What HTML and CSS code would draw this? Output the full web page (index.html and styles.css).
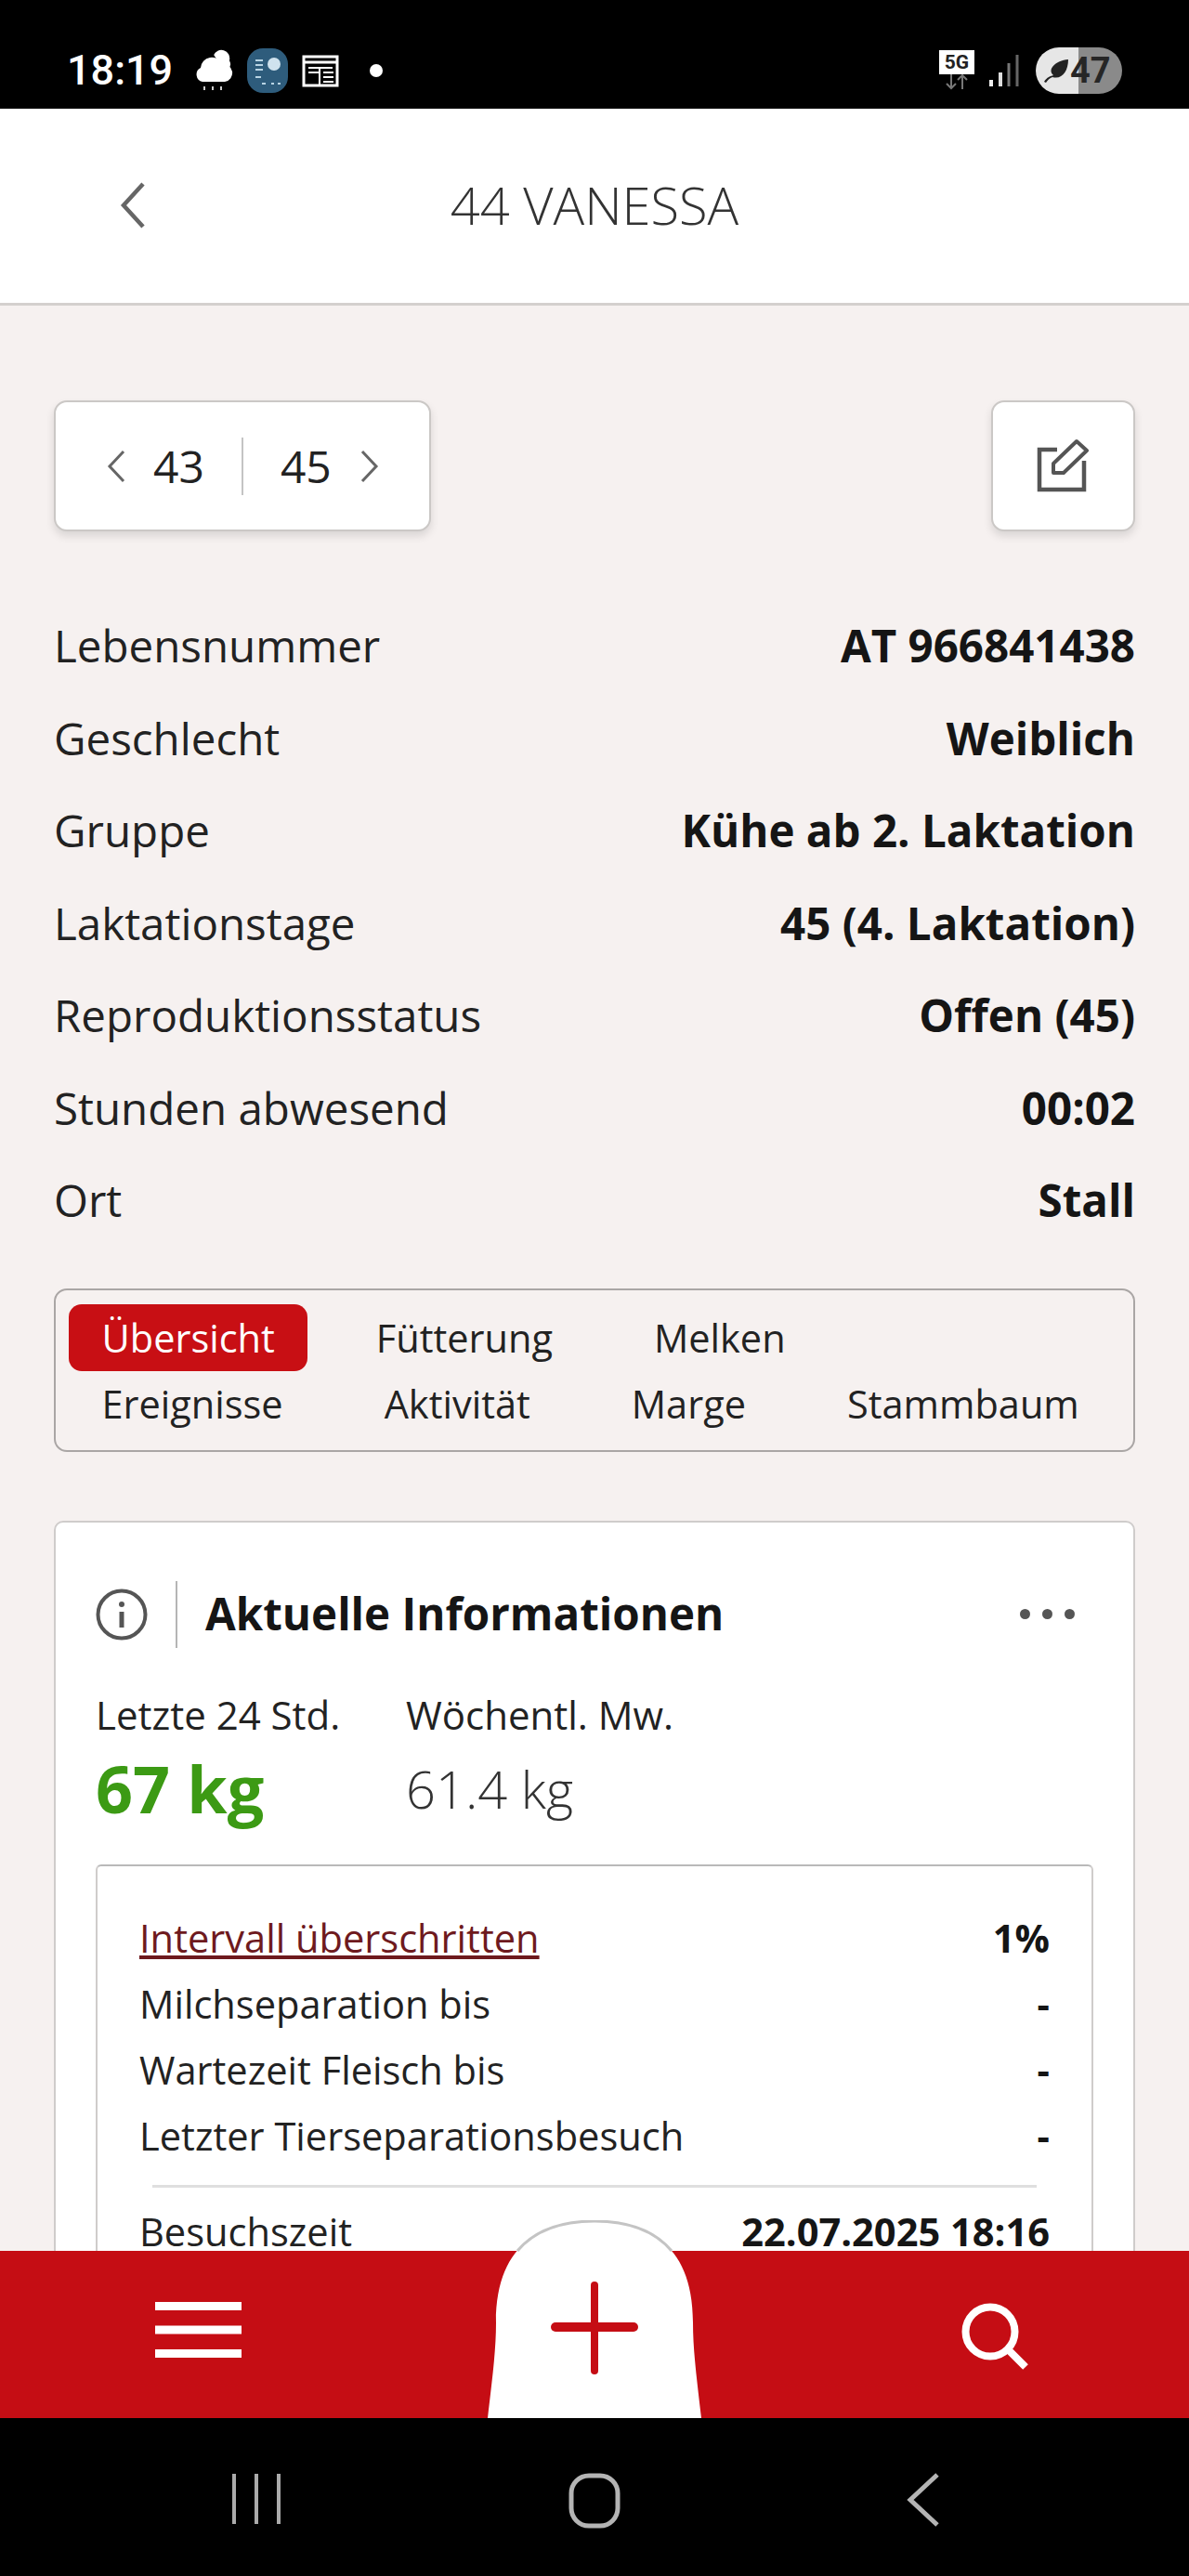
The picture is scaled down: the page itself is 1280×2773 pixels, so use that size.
FILE: index.html
```html
<!DOCTYPE html>
<html lang="de">
<head>
    <meta charset="UTF-8">
    <meta name="viewport" content="width=device-width, initial-scale=1.0">
    <title>44 VANESSA</title>
    <link rel="stylesheet" href="styles.css">
</head>
<body>
    <div class="status-bar">
        <span class="status-time">18:19</span>
        <svg class="status-cloud" width="42" height="46" viewBox="0 0 42 46">
            <path d="M20 6a10 10 0 0 1 19 6 8 8 0 0 1-2 10H30z" fill="#fff" stroke="#000" stroke-width="2"/>
            <path d="M9 35a8 8 0 0 1-2-15 12 12 0 0 1 23-4 9 9 0 0 1 3 19z" fill="#fff"/>
            <path d="M11 40v4M20 40v4M29 40v4" stroke="#ccc" stroke-width="2"/>
        </svg>
        <svg class="status-widget" width="44" height="48" viewBox="0 0 44 48">
            <rect width="44" height="48" rx="17" fill="#2e5c7c"/>
            <path d="M9 13h8M9 18h8M9 23h8M9 31h6M16 38h4M26 38h3M33 38h3" stroke="#b8d4e4" stroke-width="2"/>
            <circle cx="29" cy="17" r="7" fill="#cfe2ee"/>
        </svg>
        <svg class="status-news" width="40" height="36" viewBox="0 0 40 36">
            <path d="M2 3h36v31H2z" fill="none" stroke="#fff" stroke-width="3"/>
            <path d="M2 9h36" stroke="#fff" stroke-width="3"/>
            <path d="M7 15h26M7 20h12M23 20h11M23 25h11M23 30h11M19 15v18" stroke="#fff" stroke-width="2"/>
        </svg>
        <span class="status-dot"></span>
        <span class="status-right">
            <span class="net">
                <span class="net-box">5G</span>
                <svg width="30" height="17" viewBox="0 0 30 17">
                    <path d="M9 0v15M4 10l5 5 5-5M21 16V1M16 6l5-5 5 5" fill="none" stroke="#777" stroke-width="2"/>
                </svg>
            </span>
            <svg class="signal" width="34" height="36" viewBox="0 0 34 36">
                <path d="M3 28v7" stroke="#eee" stroke-width="4"/>
                <path d="M13 20v15" stroke="#ddd" stroke-width="4"/>
                <path d="M22 10v25" stroke="#777" stroke-width="3"/>
                <path d="M31 1v34" stroke="#666" stroke-width="3"/>
            </svg>
            <span class="battery">
                <svg width="30" height="30" viewBox="0 0 30 30">
                    <path d="M2 27C5 22 9 21 12 20 5 14 14 4 28 3 28 16 21 25 11 22 8 23 6 25 4 28z" fill="#222"/>
                </svg>
                <span>47</span>
            </span>
        </span>
    </div>

    <header class="top-bar">
        <svg class="back-icon" width="28" height="52" viewBox="0 0 28 52">
            <path d="M25 3 4 26l21 23" fill="none" stroke="#666" stroke-width="4.5"/>
        </svg>
        <h1 class="page-title">44 VANESSA</h1>
    </header>

    <main class="content">
        <div class="toolbar">
            <div class="pager">
                <svg width="20" height="36" viewBox="0 0 20 36"><path d="M18 2 3 18l15 16" fill="none" stroke="#666" stroke-width="3"/></svg>
                <span class="pager-num pager-prev">43</span>
                <span class="pager-sep"></span>
                <span class="pager-num pager-next">45</span>
                <svg width="20" height="36" viewBox="0 0 20 36"><path d="M2 2l15 16L2 34" fill="none" stroke="#666" stroke-width="3"/></svg>
            </div>
            <div class="edit-button">
                <svg width="60" height="60" viewBox="0 0 60 60">
                    <path d="M25 12H6v43h48V24" fill="none" stroke="#555" stroke-width="4.5"/>
                    <path d="M21 37V27L46 3l11 10-25 24z" fill="none" stroke="#555" stroke-width="4" stroke-linejoin="round"/>
                </svg>
            </div>
        </div>

        <dl class="facts">
            <div class="fact"><dt>Lebensnummer</dt><dd>AT 966841438</dd></div>
            <div class="fact"><dt>Geschlecht</dt><dd>Weiblich</dd></div>
            <div class="fact"><dt>Gruppe</dt><dd>Kühe ab 2. Laktation</dd></div>
            <div class="fact"><dt>Laktationstage</dt><dd>45 (4. Laktation)</dd></div>
            <div class="fact"><dt>Reproduktionsstatus</dt><dd>Offen (45)</dd></div>
            <div class="fact"><dt>Stunden abwesend</dt><dd>00:02</dd></div>
            <div class="fact"><dt>Ort</dt><dd>Stall</dd></div>
        </dl>

        <nav class="tabs">
            <div class="tab-row">
                <a class="tab active">Übersicht</a>
                <a class="tab">Fütterung</a>
                <a class="tab">Melken</a>
            </div>
            <div class="tab-row">
                <a class="tab">Ereignisse</a>
                <a class="tab">Aktivität</a>
                <a class="tab">Marge</a>
                <a class="tab">Stammbaum</a>
            </div>
        </nav>

        <section class="card">
            <div class="card-head">
                <svg class="info-icon" width="56" height="56" viewBox="0 0 56 56">
                    <circle cx="28" cy="28" r="25.5" fill="none" stroke="#555" stroke-width="4"/>
                    <circle cx="28" cy="17" r="3" fill="#555"/>
                    <path d="M28 25v17" stroke="#555" stroke-width="5"/>
                </svg>
                <h2 class="card-title">Aktuelle Informationen</h2>
                <span class="more"><i></i><i></i><i></i></span>
            </div>
            <div class="stats">
                <div class="stat stat-day">
                    <div class="stat-label">Letzte 24 Std.</div>
                    <div class="stat-value good">67 kg</div>
                </div>
                <div class="stat">
                    <div class="stat-label">Wöchentl. Mw.</div>
                    <div class="stat-value">61.4 kg</div>
                </div>
            </div>
            <div class="inner-box">
                <div class="inner-row"><a class="alert-link">Intervall überschritten</a><b>1%</b></div>
                <div class="inner-row"><span>Milchseparation bis</span><b>-</b></div>
                <div class="inner-row"><span>Wartezeit Fleisch bis</span><b>-</b></div>
                <div class="inner-row"><span>Letzter Tierseparationsbesuch</span><b>-</b></div>
                <div class="inner-divider"></div>
                <div class="inner-row"><span>Besuchszeit</span><b>22.07.2025 18:16</b></div>
            </div>
        </section>
    </main>

    <footer class="bottom-bar">
        <svg width="93" height="60" viewBox="0 0 93 60">
            <path d="M0 4.500h93M0 30h93M0 55.500h93" stroke="#fff" stroke-width="9"/>
        </svg>
        <svg width="74" height="74" viewBox="0 0 74 74">
            <circle cx="32" cy="32" r="26.500" fill="none" stroke="#fff" stroke-width="8"/>
            <path d="M50 50l20 20" stroke="#fff" stroke-width="8"/>
        </svg>
        <svg class="add-button" width="240" height="213" viewBox="0 0 240 213">
            <path d="M5 213C10 170 14 140 14 110 14 20 70 1 120 1 170 1 226 20 226 110 226 140 230 170 235 213z" fill="#fff"/>
            <path d="M37 33C58 8 90 1 120 1 150 1 182 8 203 33" fill="none" stroke="#c4c4c4" stroke-width="3"/>
            <path d="M120 70v92" stroke="#c50d14" stroke-width="8" stroke-linecap="round"/>
            <path d="M78 115h84" stroke="#c50d14" stroke-width="10" stroke-linecap="round"/>
        </svg>
    </footer>

    <div class="system-nav">
        <svg width="54" height="56" viewBox="0 0 54 56">
            <path d="M3 1v54M27 1v54M51 1v54" stroke="#aaa" stroke-width="4"/>
        </svg>
        <svg width="56" height="60" viewBox="0 0 56 60">
            <rect x="3" y="3" width="50" height="54" rx="19" fill="none" stroke="#b4b4b4" stroke-width="5"/>
        </svg>
        <svg width="36" height="58" viewBox="0 0 36 58">
            <path d="M33 2 4 29l29 27" fill="none" stroke="#b4b4b4" stroke-width="5"/>
        </svg>
    </div>
</body>
</html>
```

FILE: styles.css
```css
html, body {
    margin: 0;
    padding: 0;
}
body {
    width: 1280px;
    height: 2773px;
    display: flex;
    flex-direction: column;
    overflow: hidden;
    background: #f6f1f0;
    font-family: "Open Sans", "Noto Sans", sans-serif;
    color: #1c1c1c;
}

/* phone status bar */
.status-bar {
    height: 117px;
    flex: none;
    background: #000;
    display: flex;
    align-items: center;
    padding: 34px 72px 0;
    box-sizing: border-box;
    color: #fff;
}
.status-time {
    font-family: Roboto, sans-serif;
    font-weight: 500;
    font-size: 45px;
    width: 137px;
}
.status-widget {
    margin-left: 15px;
}
.status-news {
    margin-left: 15px;
}
.status-dot {
    width: 14px;
    height: 14px;
    border-radius: 50%;
    background: #fff;
    margin-left: 33px;
}
.status-right {
    margin-left: auto;
    display: flex;
    align-items: center;
}
.net {
    display: flex;
    flex-direction: column;
    align-items: center;
    width: 38px;
}
.net-box {
    width: 38px;
    height: 26px;
    background: #fff;
    color: #222;
    font-family: Roboto, sans-serif;
    font-weight: 700;
    font-size: 21px;
    line-height: 26px;
    text-align: center;
}
.signal {
    margin-left: 15px;
}
.battery {
    width: 93px;
    height: 50px;
    margin-left: 17px;
    border-radius: 25px;
    background: linear-gradient(90deg, #e6e6e6 49%, #8a8a8a 49%);
    display: flex;
    align-items: center;
    padding-left: 7px;
    box-sizing: border-box;
    font-family: Roboto, sans-serif;
    font-weight: 700;
    font-size: 38px;
    color: #262626;
}

/* header */
.top-bar {
    height: 212px;
    flex: none;
    background: #fff;
    display: flex;
    align-items: center;
    justify-content: center;
    position: relative;
    border-bottom: 3px solid #d4d0ce;
    box-sizing: border-box;
}
.back-icon {
    position: absolute;
    left: 129px;
    top: 78px;
}
.page-title {
    margin: 0 0 4px;
    font-weight: 300;
    font-size: 56px;
    color: #333;
}

.content {
    flex: 1;
    min-height: 0;
    overflow: hidden;
    padding: 102px 58px 0 58px;
}

/* pager + edit */
.toolbar {
    display: flex;
    justify-content: space-between;
}
.pager,
.edit-button {
    height: 141px;
    box-sizing: border-box;
    background: #fff;
    border: 2px solid #cbc8c6;
    border-radius: 14px;
    box-shadow: 0 5px 10px rgba(0, 0, 0, 0.12);
    display: flex;
    align-items: center;
}
.pager {
    width: 406px;
    padding-left: 55px;
}
.pager-num {
    font-size: 48px;
    color: #222;
}
.pager-prev {
    margin-left: 30px;
}
.pager-sep {
    width: 2px;
    height: 62px;
    margin-left: 40px;
    background: #c4c4c4;
}
.pager-next {
    margin-left: 40px;
    margin-right: 31px;
}
.edit-button {
    width: 155px;
    padding-right: 3px;
    justify-content: center;
}

/* animal facts */
.facts {
    margin: 73px 0 45px;
}
.fact {
    height: 99.500px;
    display: flex;
    justify-content: space-between;
    align-items: center;
    font-size: 47.500px;
}
.fact dt {
    color: #222;
}
.fact dd {
    margin: 0;
    font-weight: 700;
    color: #151515;
}

/* tabs */
.tabs {
    height: 176px;
    box-sizing: border-box;
    border: 2px solid #aaa6a5;
    border-radius: 14px;
    padding: 15px 14px;
}
.tab-row {
    display: flex;
    gap: 38px;
}
.tab {
    height: 72px;
    padding: 0 35.500px;
    line-height: 72px;
    border-radius: 14px;
    font-size: 41.500px;
    color: #222;
}
.tab-row + .tab-row .tab {
    height: 71px;
    line-height: 71px;
}
.tab.active {
    background: #c80f14;
    color: #fff;
}

/* info card */
.card {
    margin-top: 74px;
    background: #fff;
    border: 2px solid #cfcccb;
    border-radius: 10px;
    padding: 63px 43px 0;
    height: 1000px;
    box-sizing: border-box;
}
.card-head {
    display: flex;
    align-items: center;
    height: 72px;
    position: relative;
}
.info-icon {
    padding-right: 30px;
    border-right: 2px solid #b5b5b5;
    height: 72px;
}
.card-title {
    margin: 0 0 2px 30px;
    font-size: 47.500px;
    font-weight: 700;
    color: #151515;
}
.more {
    margin-left: auto;
    margin-right: 20px;
    display: flex;
    gap: 13px;
}
.more i {
    width: 11px;
    height: 11px;
    border-radius: 50%;
    background: #555;
}
.stats {
    display: flex;
    margin-top: 41px;
}
.stat-day {
    width: 334px;
}
.stat-label {
    height: 62px;
    line-height: 62px;
    font-size: 42px;
    color: #222;
}
.stat-value {
    height: 96px;
    line-height: 96px;
    font-size: 56px;
    font-weight: 300;
    color: #333;
}
.stat-value.good {
    font-size: 70px;
    font-weight: 700;
    color: #3c9a14;
}

.inner-box {
    margin-top: 34px;
    padding: 42px 45px 0;
    border: 2px solid #cfcccb;
    border-top-color: #b9b9b9;
    border-radius: 6px;
}
.inner-row {
    height: 71px;
    display: flex;
    justify-content: space-between;
    align-items: center;
    font-size: 41.600px;
    color: #222;
}
.inner-row b {
    color: #151515;
}
.alert-link {
    color: #6e1a1e;
    text-decoration: underline;
}
.inner-divider {
    height: 3px;
    margin: 17px 14px 12px;
    background: #dfdfdf;
}

/* bottom action bar */
.bottom-bar {
    height: 180px;
    flex: none;
    background: #c50d14;
    display: flex;
    justify-content: space-between;
    align-items: flex-start;
    padding: 55px 172px 0 167px;
    box-sizing: border-box;
    position: relative;
}
.add-button {
    position: absolute;
    left: 520px;
    top: -33px;
}

.system-nav {
    height: 170px;
    flex: none;
    background: #000;
    display: flex;
    justify-content: space-between;
    align-items: flex-start;
    padding: 59px 268px 0 249px;
    box-sizing: border-box;
}
```
